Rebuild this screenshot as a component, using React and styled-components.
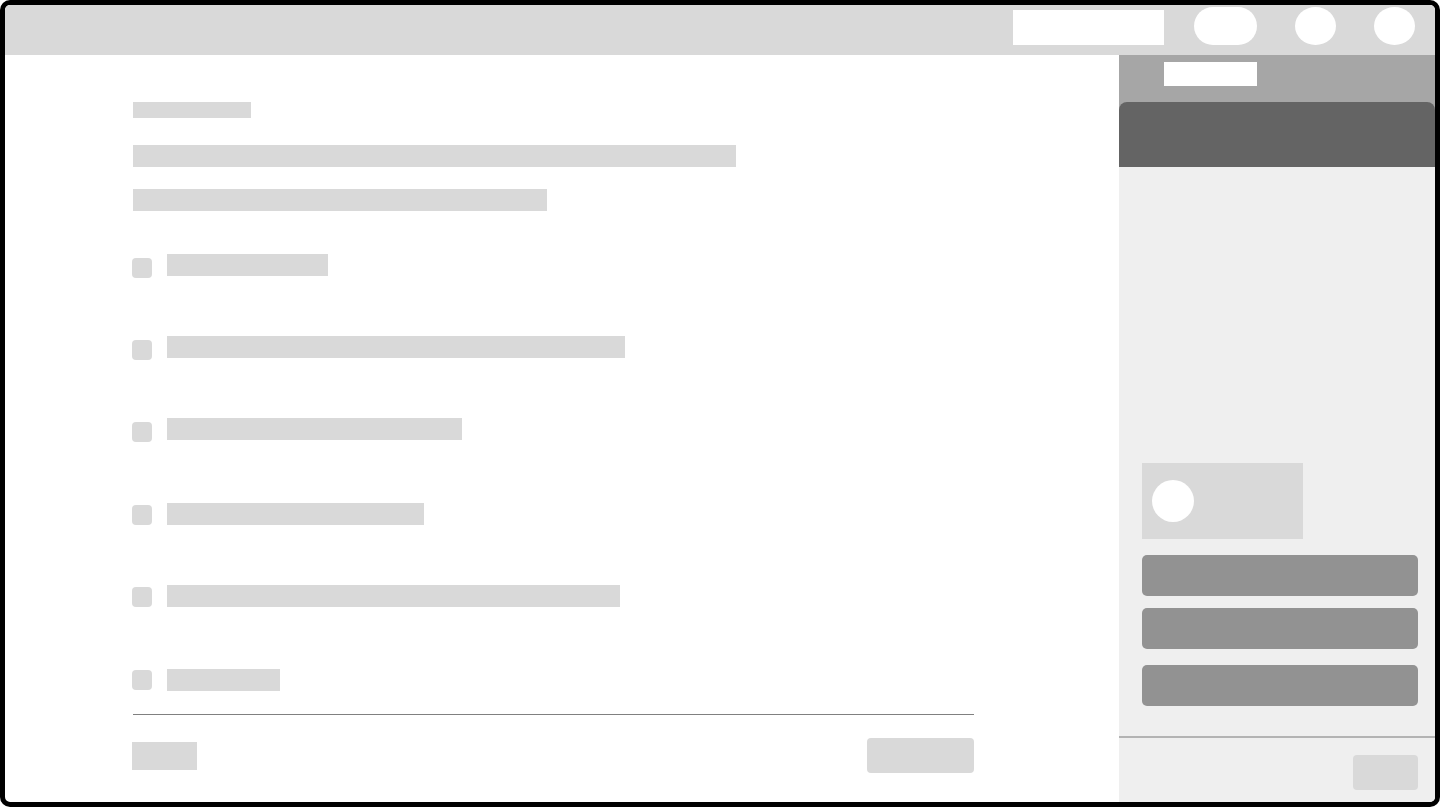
import styled, { createGlobalStyle } from 'styled-components';

const GlobalStyle = createGlobalStyle`
  html, body {
    margin: 0;
    padding: 0;
    background: #fff;
    font-family: "Liberation Sans", Arial, sans-serif;
  }
  * { box-sizing: border-box; }
`;

const Frame = styled.div`
  width: 1440px;
  height: 807px;
  border: 5px solid #000;
  border-radius: 10px;
  overflow: hidden;
  display: flex;
  flex-direction: column;
  background: #fff;
`;

const TopBar = styled.header`
  height: 50px;
  flex: none;
  background: #d9d9d9;
  display: flex;
  align-items: flex-start;
  justify-content: flex-end;
  padding: 2px 20px 0 0;
  .search {
    width: 151px;
    height: 35px;
    background: #fff;
    margin: 3px 30px 0 0;
  }
  .pill {
    width: 63px;
    height: 38px;
    border-radius: 19px;
    background: #fff;
    margin-right: 38px;
  }
  .dot {
    width: 41px;
    height: 38px;
    border-radius: 50%;
    background: #fff;
  }
  .dot + .dot {
    margin-left: 38px;
  }
`;

const Body = styled.div`
  flex: 1;
  display: flex;
  min-height: 0;
`;

const Main = styled.main`
  flex: 1;
  padding: 47px 0 0 128px;
  .inner {
    width: 841px;
    display: flex;
    flex-direction: column;
  }
`;

const Bar = styled.div`
  background: #d9d9d9;
  width: ${p => p.$w}px;
  height: ${p => p.$h || 22}px;
  margin-top: ${p => p.$mt || 0}px;
`;

const CheckRow = styled.label`
  display: flex;
  align-items: flex-start;
  height: 22px;
  margin-top: ${p => p.$mt}px;
  margin-left: -1px;
  .box {
    flex: none;
    width: 20px;
    height: 20px;
    border-radius: 4px;
    background: #d9d9d9;
    margin-top: ${p => p.$boxTop}px;
  }
  .text {
    height: 22px;
    background: #d9d9d9;
    margin-left: 15px;
  }
`;

const Divider = styled.hr`
  border: none;
  border-top: 1px solid #808080;
  margin: 23px 0 0;
  width: 841px;
`;

const Footer = styled.div`
  height: 35px;
  margin-top: 23px;
  display: flex;
  align-items: center;
  justify-content: space-between;
  .back {
    width: 65px;
    height: 28px;
    background: #d9d9d9;
    margin-left: -1px;
  }
  .next {
    width: 107px;
    height: 35px;
    border-radius: 4px;
    background: #d9d9d9;
  }
`;

const Aside = styled.aside`
  width: 316px;
  flex: none;
  display: flex;
  flex-direction: column;
  background: #efefef;
`;

const AsideTop = styled.div`
  height: 47px;
  background: #a6a6a6;
  padding: 7px 0 0 45px;
  .tab {
    width: 93px;
    height: 24px;
    background: #fff;
  }
`;

const BannerWrap = styled.div`
  background: #a6a6a6;
`;

const AsideBanner = styled.div`
  height: 65px;
  background: #646464;
  border-radius: 8px 8px 0 0;
`;

const AsideBody = styled.div`
  flex: 1;
  display: flex;
  flex-direction: column;
  justify-content: flex-end;
  padding: 0 17px 30px 23px;
`;

const ProfileCard = styled.div`
  width: 161px;
  height: 76px;
  background: #d9d9d9;
  display: flex;
  align-items: center;
  padding-left: 10px;
  .avatar {
    width: 42px;
    height: 42px;
    border-radius: 50%;
    background: #fff;
  }
`;

const ActionButton = styled.button`
  display: block;
  width: 100%;
  height: 41px;
  border: none;
  border-radius: 5px;
  background: #929292;
  margin-top: ${p => p.$mt}px;
  padding: 0;
`;

const AsideFooter = styled.div`
  height: 66px;
  flex: none;
  border-top: 2px solid #b3b3b3;
  display: flex;
  justify-content: flex-end;
  padding: 17px 17px 0 0;
  .btn {
    width: 65px;
    height: 35px;
    border-radius: 4px;
    background: #d9d9d9;
  }
`;

const items = [
  { w: 161, mt: 43, box: 4 },
  { w: 458, mt: 60, box: 4 },
  { w: 295, mt: 60, box: 4 },
  { w: 257, mt: 63, box: 2 },
  { w: 453, mt: 60, box: 2 },
  { w: 113, mt: 62, box: 1 },
];

export default function App() {
  return (
    <>
      <GlobalStyle />
      <Frame>
        <TopBar>
          <div className="search" />
          <div className="pill" />
          <div className="dot" />
          <div className="dot" />
        </TopBar>
        <Body>
          <Main>
            <div className="inner">
              <Bar $w={118} $h={16} />
              <Bar $w={603} $mt={27} />
              <Bar $w={414} $mt={22} />
              {items.map((it, i) => (
                <CheckRow key={i} $mt={it.mt} $boxTop={it.box}>
                  <span className="box" />
                  <span className="text" style={{ width: it.w }} />
                </CheckRow>
              ))}
              <Divider />
              <Footer>
                <div className="back" />
                <div className="next" />
              </Footer>
            </div>
          </Main>
          <Aside>
            <AsideTop>
              <div className="tab" />
            </AsideTop>
            <BannerWrap>
              <AsideBanner />
            </BannerWrap>
            <AsideBody>
              <ProfileCard>
                <div className="avatar" />
              </ProfileCard>
              <ActionButton $mt={16} />
              <ActionButton $mt={12} />
              <ActionButton $mt={16} />
            </AsideBody>
            <AsideFooter>
              <div className="btn" />
            </AsideFooter>
          </Aside>
        </Body>
      </Frame>
    </>
  );
}
